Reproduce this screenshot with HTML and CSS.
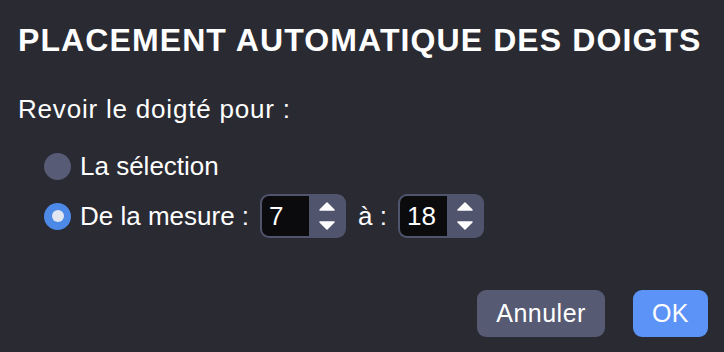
FILE: index.html
```html
<!DOCTYPE html>
<html lang="fr">
  <head>
    <meta charset="UTF-8" />
    <meta name="viewport" content="width=device-width, initial-scale=1.0" />
    <title>Placement automatique des doigts</title>
    <link rel="stylesheet" href="styles.css">
  </head>
  <body>
    <div class="dialog">
      <h1>PLACEMENT AUTOMATIQUE DES DOIGTS</h1>
      <p class="prompt">Revoir le doigté pour :</p>

      <div class="options">
        <div class="option">
          <span class="radio"></span>
          <span class="label">La sélection</span>
        </div>
        <div class="option">
          <span class="radio checked"><span class="dot"></span></span>
          <span class="label">De la mesure :</span>
          <div class="spinner">
            <div class="spinner-value">7</div>
            <div class="spinner-arrows">
              <svg width="16" height="9" viewBox="0 0 16 9"><path d="M8 1 L15 8 L1 8 Z" fill="#fff" stroke="#fff" stroke-width="1.5" stroke-linejoin="round"/></svg>
              <svg width="16" height="9" viewBox="0 0 16 9"><path d="M1 1 L15 1 L8 8 Z" fill="#fff" stroke="#fff" stroke-width="1.5" stroke-linejoin="round"/></svg>
            </div>
          </div>
          <span class="label to">à :</span>
          <div class="spinner">
            <div class="spinner-value">18</div>
            <div class="spinner-arrows">
              <svg width="16" height="9" viewBox="0 0 16 9"><path d="M8 1 L15 8 L1 8 Z" fill="#fff" stroke="#fff" stroke-width="1.5" stroke-linejoin="round"/></svg>
              <svg width="16" height="9" viewBox="0 0 16 9"><path d="M1 1 L15 1 L8 8 Z" fill="#fff" stroke="#fff" stroke-width="1.5" stroke-linejoin="round"/></svg>
            </div>
          </div>
        </div>
      </div>

      <div class="buttons">
        <button class="btn btn-cancel">Annuler</button>
        <button class="btn btn-ok">OK</button>
      </div>
    </div>
  </body>
</html>
```

FILE: styles.css
```css
html,
body {
  margin: 0;
  height: 100%;
}
body {
  background-color: #2a2a32;
  color: #fff;
  font-family: "Liberation Sans", Helvetica, Arial, sans-serif;
}
.dialog {
  padding: 22px 16px 0 18px;
}
h1 {
  margin: 0;
  font-size: 32px;
  line-height: 36px;
  font-weight: bold;
  letter-spacing: 1.1px;
}
.prompt {
  margin: 35px 0 0 0;
  font-size: 26px;
  line-height: 32px;
  letter-spacing: 0.8px;
}
.options {
  margin-top: 19px;
  padding-left: 26px;
  display: flex;
  flex-direction: column;
  gap: 6px;
}
.option {
  display: flex;
  align-items: center;
  height: 44px;
}
.label {
  font-size: 26px;
  line-height: 32px;
}
.radio {
  width: 27px;
  height: 27px;
  border-radius: 50%;
  background-color: #575b76;
  margin-right: 9px;
  display: flex;
  align-items: center;
  justify-content: center;
}
.radio.checked {
  background-color: #4d8ae8;
}
.radio .dot {
  width: 12px;
  height: 12px;
  border-radius: 50%;
  background-color: #e2e6f0;
}
.spinner {
  margin-left: 11px;
  width: 86px;
  height: 44px;
  box-sizing: border-box;
  border-radius: 9px;
  background-color: #50546c;
  padding: 2px;
  display: flex;
}
.spinner-value {
  width: 47px;
  background-color: #0b0b0e;
  border-radius: 7px 0 0 7px;
  font-size: 26px;
  line-height: 40px;
  padding-left: 7px;
  box-sizing: border-box;
}
.spinner-arrows {
  flex: 1;
  display: flex;
  flex-direction: column;
  align-items: center;
  justify-content: center;
  gap: 10px;
}
.spinner-arrows svg {
  display: block;
}
.to {
  margin-left: 12px;
}
.buttons {
  margin-top: 52px;
  display: flex;
  justify-content: flex-end;
  gap: 28px;
}
.btn {
  height: 47px;
  border: 0;
  border-radius: 9px;
  padding: 0 19px;
  color: #fff;
  font-family: "Liberation Sans", Helvetica, Arial, sans-serif;
  font-size: 25px;
  letter-spacing: 0.5px;
}
.btn-cancel {
  background-color: #565a73;
}
.btn-ok {
  background-color: #5b94f6;
}
```
